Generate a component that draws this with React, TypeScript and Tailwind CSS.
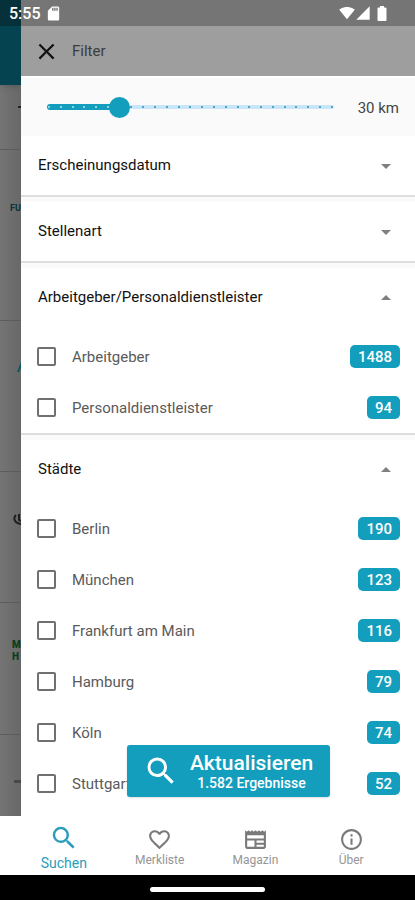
import { useState } from "react";
import {
  MdArrowDropDown,
  MdArrowDropUp,
  MdClose,
  MdFavoriteBorder,
  MdInfoOutline,
  MdNewspaper,
  MdSdCard,
  MdSearch,
  MdSignalCellular4Bar,
  MdSignalWifi4Bar,
} from "react-icons/md";

const employers = [
  { label: "Arbeitgeber", count: 1488 },
  { label: "Personaldienstleister", count: 94 },
];

const cities = [
  { label: "Berlin", count: 190 },
  { label: "München", count: 123 },
  { label: "Frankfurt am Main", count: 116 },
  { label: "Hamburg", count: 79 },
  { label: "Köln", count: 74 },
  { label: "Stuttgart", count: 52 },
];

type Option = { label: string; count: number };

const StatusBar = () => (
  <div className="flex h-[26px] items-center bg-[linear-gradient(to_right,#06303a_21px,#757575_21px)] pl-[9px] pr-7 text-white">
    <span className="pt-0.5 text-base font-medium">5:55</span>
    <MdSdCard className="ml-1 size-[17px]" />
    <MdSignalWifi4Bar className="ml-auto size-4" />
    <MdSignalCellular4Bar className="size-4" />
    <svg viewBox="0 0 10 15" className="ml-1.5 h-[15px] w-2.5" fill="currentColor">
      <path d="M3 0h4v1.5h1.5a1 1 0 0 1 1 1V14a1 1 0 0 1-1 1h-7a1 1 0 0 1-1-1V2.5a1 1 0 0 1 1-1H3z" />
    </svg>
  </div>
);

// Result list that stays visible behind the drawer
const Backdrop = () => (
  <div className="flex w-[21px] shrink-0 flex-col overflow-hidden bg-linear-to-r from-[#747474] to-[#686868]">
    <div className="h-[59px] bg-[#04434f] shadow-md" />
    <div className="flex h-[65px] items-center justify-end border-b border-[#5c5c5c] pb-5">
      <span className="h-0.5 w-[3px] bg-[#222]" />
    </div>
    <div className="h-[171px] border-b border-[#5c5c5c] pl-2.5 pt-[50px] text-[9px] leading-4 font-bold text-[#06343a]">
      FU
    </div>
    <div className="flex h-[151px] justify-end border-b border-[#5c5c5c] pt-[41px]">
      <svg viewBox="0 0 4 10" className="h-2.5 w-1">
        <path d="M0 10 4 0v6L2 10z" fill="#0b5a62" />
      </svg>
    </div>
    <div className="flex h-[131px] justify-end border-b border-[#5c5c5c] pt-10">
      <svg viewBox="0 0 8 14" className="h-3.5 w-2" fill="none" stroke="#1f1f1f" strokeWidth="2">
        <path d="M3 3C0 6 1 11 8 12M6 2v6l2 1" />
      </svg>
    </div>
    <div className="h-[132px] border-b border-[#5c5c5c] pl-3 pt-9 text-[10px] leading-3 font-black text-[#0a3d1c]">
      <p>M</p>
      <p>H</p>
    </div>
    <div className="flex flex-1 justify-end pt-[45px]">
      <span className="h-[3px] w-[7px] bg-[#484848]" />
    </div>
  </div>
);

const DistanceSlider = () => {
  const [distance, setDistance] = useState(30);
  return (
    <div className="flex h-[60px] items-center border-t-2 border-white bg-[#fafafa] pr-4 pl-[17px]">
      <div className="relative flex h-6 flex-1 items-center">
        <div className="absolute inset-x-[9px] h-1 rounded-full bg-[#c9e6f8]" />
        <div className="absolute inset-x-[9px] flex h-1.5">
          <div
            className="rounded-full bg-[#139ebd]"
            style={{ width: `${(distance / 120) * 100}%` }}
          />
        </div>
        <div className="absolute inset-x-2.5 flex justify-between">
          {Array.from({ length: 25 }, (_, i) => (
            <span
              key={i}
              className={`size-0.5 ${i * 5 < distance ? "bg-[#8fd3e4]" : "bg-[#4fa9c4]"}`}
            />
          ))}
        </div>
        <input
          type="range"
          aria-label="Umkreis"
          min={0}
          max={120}
          step={5}
          value={distance}
          onChange={(e) => setDistance(Number(e.target.value))}
          className="relative w-full appearance-none bg-transparent [&::-webkit-slider-thumb]:size-[21px] [&::-webkit-slider-thumb]:appearance-none [&::-webkit-slider-thumb]:rounded-full [&::-webkit-slider-thumb]:bg-[#139ebd]"
        />
      </div>
      <span className="w-14 pt-0.5 text-right text-[15px] text-[#444]">
        {distance} km
      </span>
    </div>
  );
};

const OptionRow = ({ label, count }: Option) => (
  <label className="flex h-[51px] items-center pr-[15px] pl-4">
    <input
      type="checkbox"
      className="size-[19px] appearance-none rounded-xs border-2 border-[#707070] checked:bg-[#139ebd]"
    />
    <span className="ml-4 pt-0.5 text-[15px] text-[#5a5a5a]">{label}</span>
    <span className="ml-auto flex h-[23px] items-center rounded-[5px] bg-[#139ebd] px-2 pt-0.5 text-[15px] font-medium text-white">
      {count}
    </span>
  </label>
);

const Section = ({ title, options }: { title: string; options?: Option[] }) => {
  const [open, setOpen] = useState(Boolean(options));
  return (
    <section className="border-b-2 border-[#dedede] last:border-b-0">
      <button
        type="button"
        aria-expanded={open}
        onClick={() => setOpen(!open)}
        className="flex h-[59px] w-full items-center justify-between px-[17px] text-[15px] text-[#111]"
      >
        <span>{title}</span>
        {open ? (
          <MdArrowDropUp className="size-6 text-[#808080]" />
        ) : (
          <MdArrowDropDown className="size-6 text-[#808080]" />
        )}
      </button>
      {open && options && (
        <div className="pt-1">
          {options.map((option) => (
            <OptionRow key={option.label} {...option} />
          ))}
        </div>
      )}
    </section>
  );
};

const BottomNav = () => (
  <nav className="flex h-[59px] bg-white px-4 text-xs text-[#959595]">
    <a href="#suchen" className="flex flex-1 flex-col items-center pt-[7px] text-sm text-[#2a9dbb]">
      <MdSearch className="size-[30px]" />
      Suchen
    </a>
    <a href="#merkliste" className="flex flex-1 flex-col items-center pt-[11px]">
      <MdFavoriteBorder className="size-[25px] text-[#7a7a7a]" />
      Merkliste
    </a>
    <a href="#magazin" className="flex flex-1 flex-col items-center pt-[11px]">
      <MdNewspaper className="size-[25px] text-[#7a7a7a]" />
      Magazin
    </a>
    <a href="#ueber" className="flex flex-1 flex-col items-center pt-[11px]">
      <MdInfoOutline className="size-[25px] text-[#7a7a7a]" />
      Über
    </a>
  </nav>
);

const App = () => {
  return (
    <div className="flex min-h-screen flex-col bg-white font-['Roboto',sans-serif]">
      <StatusBar />
      <div className="flex flex-1">
        <Backdrop />
        <main className="relative flex-1 bg-white">
          <header className="flex h-[50px] items-center bg-[#9e9e9e] pl-3">
            <button type="button" aria-label="Schließen">
              <MdClose className="size-[27px] text-[#111]" />
            </button>
            <h1 className="ml-3 text-[15px] text-[#3c3c3c]">Filter</h1>
          </header>
          <DistanceSlider />
          <div>
            <Section title="Erscheinungsdatum" />
            <div className="h-[5px] bg-[#fafafa]" />
            <Section title="Stellenart" />
            <div className="h-[5px] bg-[#fafafa]" />
            <Section title="Arbeitgeber/Personaldienstleister" options={employers} />
            <div className="h-[5px] bg-[#fafafa]" />
            <Section title="Städte" options={cities} />
          </div>
          <button
            type="button"
            className="absolute right-[85px] bottom-[19px] flex h-[52px] w-[203px] items-center rounded-[3px] bg-[#139ebd] pl-4 text-white shadow"
          >
            <MdSearch className="size-9" />
            <span className="flex flex-1 flex-col items-center pt-0.5 pr-1.5">
              <span className="text-[21px] leading-[22px] font-medium">Aktualisieren</span>
              <span className="text-sm leading-[18px] font-medium">1.582 Ergebnisse</span>
            </span>
          </button>
        </main>
      </div>
      <BottomNav />
      <div className="flex h-[25px] items-center justify-center bg-black pt-1">
        <div className="h-[5px] w-[115px] rounded-full bg-white" />
      </div>
    </div>
  );
};

export default App;
